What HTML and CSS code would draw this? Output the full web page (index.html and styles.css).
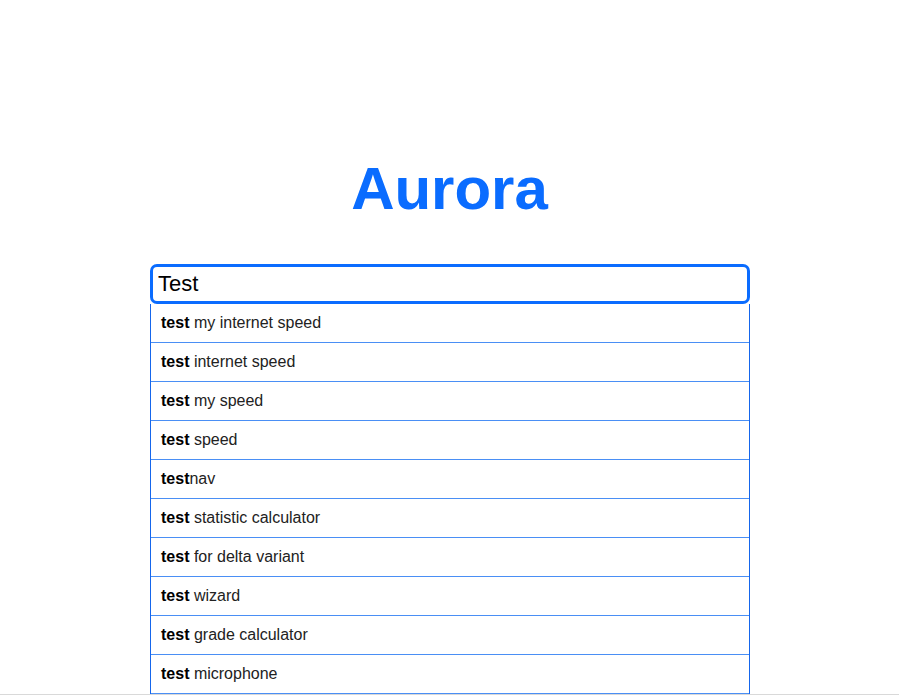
FILE: index.html
```html
<!DOCTYPE html>
<html lang="en">
<head>
<meta charset="utf-8">
<title>Aurora</title>
<link rel="stylesheet" href="styles.css">
</head>
<body>
<main class="page">
  <h1 class="logo">Aurora</h1>
  <div class="search">
    <input class="search-input" type="text" value="Test">
    <ul class="suggestions">
      <li class="suggestion"><b>test</b> my internet speed</li>
      <li class="suggestion"><b>test</b> internet speed</li>
      <li class="suggestion"><b>test</b> my speed</li>
      <li class="suggestion"><b>test</b> speed</li>
      <li class="suggestion"><b>test</b>nav</li>
      <li class="suggestion"><b>test</b> statistic calculator</li>
      <li class="suggestion"><b>test</b> for delta variant</li>
      <li class="suggestion"><b>test</b> wizard</li>
      <li class="suggestion"><b>test</b> grade calculator</li>
      <li class="suggestion"><b>test</b> microphone</li>
    </ul>
  </div>
</main>
<div class="bottom-edge"></div>
</body>
</html>
```
FILE: styles.css
```css
html, body {
  margin: 0;
  padding: 0;
  background: #ffffff;
  overflow: hidden;
  height: 100%;
}
body {
  font-family: "Liberation Sans", Arial, sans-serif;
  color: #202020;
}
.page {
  padding-top: 154px;
  display: flex;
  flex-direction: column;
  align-items: center;
}
.logo {
  margin: 0 0 41px 0;
  font-size: 60px;
  line-height: 69px;
  font-weight: bold;
  color: #0a6cff;
}
.search {
  width: 600px;
  margin-left: 1px;
  display: flex;
  flex-direction: column;
}
.search-input {
  box-sizing: border-box;
  width: 600px;
  height: 40px;
  margin: 0;
  padding: 0 5px;
  border: 3px solid #0a6cff;
  border-radius: 7px;
  outline: none;
  font-family: "Liberation Sans", Arial, sans-serif;
  font-size: 22px;
  color: #000;
  background: #fff;
}
.suggestions {
  list-style: none;
  margin: 0;
  padding: 0;
  width: 600px;
  box-sizing: border-box;
  border-left: 1px solid #1566ec;
  border-right: 1px solid #1566ec;
}
.suggestion {
  height: 38px;
  line-height: 38px;
  padding-left: 10px;
  font-size: 16px;
  color: #222222;
  border-bottom: 1px solid #4a8ff5;
}
.suggestion b {
  color: #000;
}
.bottom-edge {
  position: fixed;
  left: 0;
  right: 0;
  bottom: 2px;
  height: 1px;
  background: #d9d9d9;
}
```
